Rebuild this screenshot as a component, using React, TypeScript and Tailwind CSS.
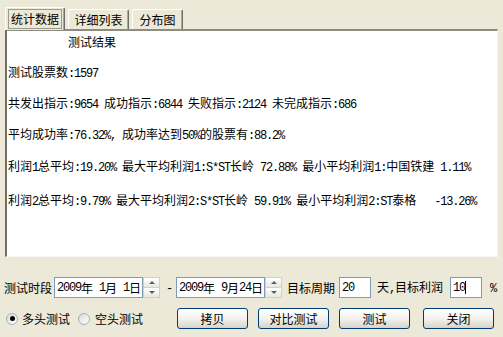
import React from 'react';

// ASCII runs are drawn half-width (6px), like SimSun does next to 12px CJK glyphs
const T = ({ s }: { s: string }) => (
  <>
    {s.split(/([\x20-\x7e]+)/).map((p, i) =>
      /[\x20-\x7e]/.test(p) ? (
        <span key={i} className="font-['Liberation_Mono'] text-[12px] tracking-[-1.2px]">
          {p}
        </span>
      ) : (
        p
      )
    )}
  </>
);

const Tab = ({ label, active, w }: { label: string; active?: boolean; w: string }) => (
  <div
    className={`${w} ${
      active ? 'h-[23px] -mb-px z-10' : 'h-[20px]'
    } flex items-center justify-center border border-b-0 border-t-white border-l-white border-r-[#716f64] rounded-t-[2px] bg-[#ece9d8] shadow-[inset_-1px_0_0_#aca899]`}
  >
    <span className={active ? 'px-[2px] outline outline-1 outline-[#9a9a92]' : ''}>{label}</span>
  </div>
);

const Spinner = () => (
  <div className="w-[17px] h-[21px] flex flex-col border border-[#d4d0c8] bg-[#f3f2ec]">
    <div className="flex-1 flex items-center justify-center border-b border-[#d4d0c8] bg-linear-to-b from-white to-[#e9e7df]">
      <div className="w-0 h-0 border-l-[3px] border-r-[3px] border-b-[3px] border-l-transparent border-r-transparent border-b-[#4d6185]" />
    </div>
    <div className="flex-1 flex items-center justify-center bg-linear-to-b from-white to-[#e9e7df]">
      <div className="w-0 h-0 border-l-[3px] border-r-[3px] border-t-[3px] border-l-transparent border-r-transparent border-t-[#4d6185]" />
    </div>
  </div>
);

const DateBox = ({ value }: { value: string }) => (
  <div className="w-[89px] h-[21px] flex items-center pl-[2px] bg-white border border-[#7f9db9] whitespace-pre">
    <T s={value} />
  </div>
);

const Button = ({ label, ml }: { label: string; ml: string }) => (
  <button
    className={`${ml} w-[71px] h-[21px] flex items-center justify-center rounded-[3px] border border-[#003c74] bg-linear-to-b from-white via-[#f3f2ee] to-[#d8d4ca] text-black`}
  >
    {label}
  </button>
);

const Radio = ({ checked }: { checked?: boolean }) => (
  <div className="w-[12px] h-[12px] rounded-full border border-[#9cb3c8] bg-linear-to-br from-[#dcdcd5] to-white flex items-center justify-center">
    {checked && <div className="w-[5px] h-[5px] rounded-full bg-black" />}
  </div>
);

const lines = [
  { s: '测试股票数:1597', mt: 'mt-[14px]' },
  { s: '共发出指示:9654 成功指示:6844 失败指示:2124 未完成指示:686', mt: 'mt-[15px]' },
  { s: '平均成功率:76.32%, 成功率达到50%的股票有:88.2%', mt: 'mt-[15px]' },
  { s: '利润1总平均:19.20% 最大平均利润1:S*ST长岭 72.88% 最小平均利润1:中国铁建 1.11%', mt: 'mt-[16px]' },
  { s: '利润2总平均:9.79% 最大平均利润2:S*ST长岭 59.91% 最小平均利润2:ST泰格   -13.26%', mt: 'mt-[18px]' },
];

export default function App() {
  return (
    <div className="w-[503px] h-[337px] bg-[#ece9d8] flex flex-col text-[12px] text-black font-['Noto_Sans_CJK_SC',sans-serif] overflow-hidden">
      {/* Tabs */}
      <div className="h-[29px] pl-[5px] flex items-end gap-[3px]">
        <Tab label="统计数据" active w="w-[60px]" />
        <Tab label="详细列表" w="w-[61px]" />
        <Tab label="分布图" w="w-[51px]" />
      </div>

      {/* Result panel */}
      <div className="mx-[5px] h-[228px] bg-white border-t-2 border-l-2 border-t-[#8d8b82] border-l-[#6f6d66] border-r border-b border-r-[#f7f6f2] border-b-[#f7f6f2] pl-[1px] flex flex-col">
        <div className="h-[16px] leading-[16px] mt-[3px] ml-[60px]">测试结果</div>
        {lines.map(l => (
          <div key={l.s} className={`${l.mt} h-[16px] leading-[16px] whitespace-pre`}>
            <T s={l.s} />
          </div>
        ))}
      </div>

      {/* Period and targets */}
      <div className="mt-[20px] h-[21px] pl-[4px] flex items-center">
        <span>测试时段</span>
        <div className="ml-[2px]"><DateBox value="2009年 1月 1日" /></div>
        <Spinner />
        <span className="ml-[6px] w-[6px]"><T s="-" /></span>
        <div className="ml-[4px]"><DateBox value="2009年 9月24日" /></div>
        <Spinner />
        <span className="ml-[5px]">目标周期</span>
        <div className="ml-[4px] w-[32px] h-[21px] pl-[2px] flex items-center bg-white border border-[#7f9db9]">
          <T s="20" />
        </div>
        <span className="ml-[6px]">天<T s="," />目标利润</span>
        <div className="ml-[7px] w-[32px] h-[21px] pl-[2px] flex items-center bg-white border border-[#7f9db9]">
          <T s="10" />
          <div className="w-px h-[13px] bg-black" />
        </div>
        <span className="ml-[8px]"><T s="%" /></span>
      </div>

      {/* Direction and actions */}
      <div className="mt-[10px] h-[21px] pl-[6px] flex items-center">
        <Radio checked />
        <span className="ml-[4px]">多头测试</span>
        <div className="ml-[8px]"><Radio /></div>
        <span className="ml-[5px]">空头测试</span>
        <Button label="拷贝" ml="ml-[34px]" />
        <Button label="对比测试" ml="ml-[10px]" />
        <Button label="测试" ml="ml-[10px]" />
        <Button label="关闭" ml="ml-[13px]" />
      </div>
    </div>
  );
}
